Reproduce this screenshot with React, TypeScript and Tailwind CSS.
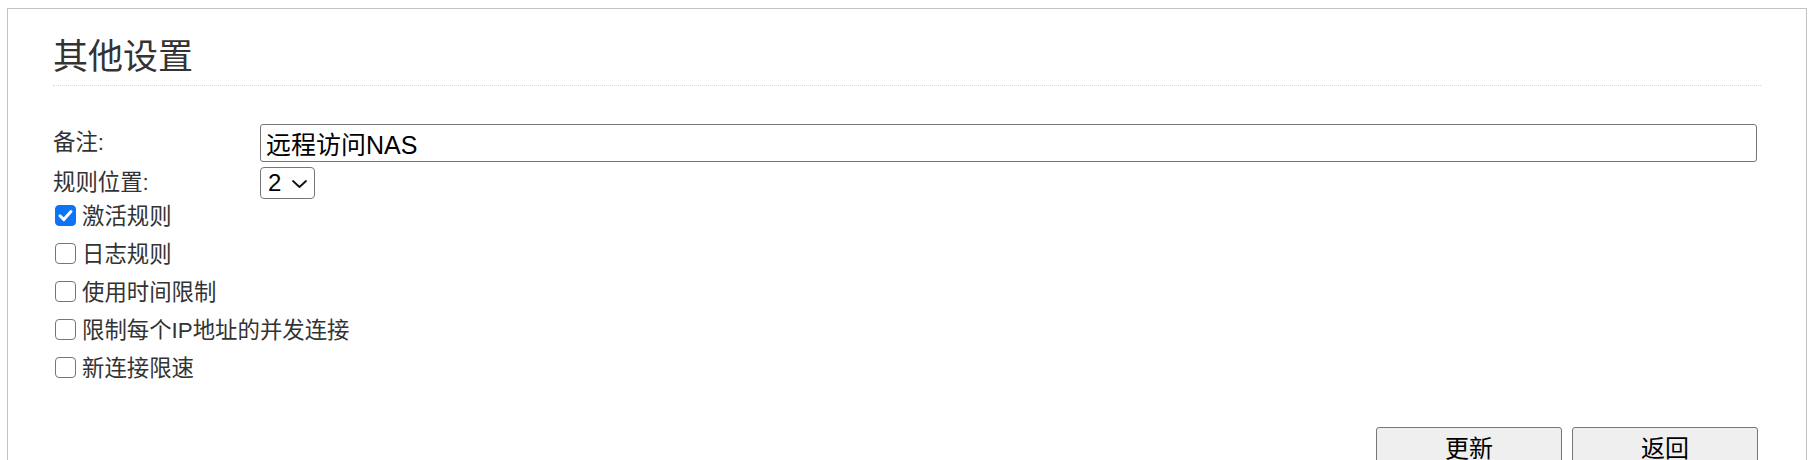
import React from "react";

const font = { fontFamily: '"Liberation Sans", "Noto Sans CJK SC", sans-serif' };

function CheckRow({ label, checked }: { label: string; checked?: boolean }) {
  return (
    <label className="flex items-start h-[38px]">
      <span className="relative mt-[6px] ml-[2px] w-[21px] h-[21px] shrink-0">
        <input
          type="checkbox"
          defaultChecked={checked}
          className="appearance-none block w-[21px] h-[21px] m-0 border-[1.5px] border-[#767676] rounded-[4px] bg-white checked:bg-[#0b75f5] checked:border-[#0b75f5]"
        />
        {checked && (
          <svg
            className="absolute left-0 top-0 pointer-events-none"
            width="21"
            height="21"
            viewBox="0 0 21 21"
            fill="none"
          >
            <path d="M5 10.8L8.8 14.6L16 6.6" stroke="#fff" strokeWidth="3" strokeLinecap="round" strokeLinejoin="round" />
          </svg>
        )}
      </span>
      <span className="ml-[6px] text-[22.4px] leading-[36px] text-[#333]">{label}</span>
    </label>
  );
}

export default function App() {
  return (
    <div className="min-h-screen bg-white pl-[7px] pr-[10px] pt-[8px]" style={font}>
      <div className="border border-[#c4c4c4] px-[45px] pb-[40px]">
        <h2 className="pt-[26px] pb-[6px] border-b border-dotted border-[#d9d9d9] text-[35px] leading-[44px] text-[#333] font-normal">
          其他设置
        </h2>
        <div className="mt-[38px] flex flex-col">
          <div className="flex items-center h-[38px]">
            <span className="w-[207px] shrink-0 text-[22.4px] leading-[28px] text-[#333]">备注:</span>
            <input
              type="text"
              defaultValue="远程访问NAS"
              className="flex-1 h-[38px] mr-[4px] border border-[#767676] rounded-[3px] px-[5px] text-[25px] text-black outline-none"
            />
          </div>
          <div className="flex items-center h-[32px] mt-[5px]">
            <span className="w-[207px] shrink-0 text-[22.4px] leading-[28px] text-[#333]">规则位置:</span>
            <div className="relative inline-flex">
              <select
                defaultValue="2"
                className="appearance-none w-[55px] h-[32px] border border-[#767676] rounded-[4px] pl-[7px] text-[24px] leading-[30px] text-black bg-white outline-none"
              >
                <option value="1">1</option>
                <option value="2">2</option>
                <option value="3">3</option>
              </select>
              <svg
                className="absolute right-[8px] top-[13px] pointer-events-none"
                width="15"
                height="8"
                viewBox="0 0 15 8"
                fill="none"
              >
                <path d="M1 1L7.5 7L14 1" stroke="#111" strokeWidth="1.8" strokeLinecap="round" strokeLinejoin="round" />
              </svg>
            </div>
          </div>
          <div className="flex flex-col">
            <CheckRow label="激活规则" checked />
            <CheckRow label="日志规则" />
            <CheckRow label="使用时间限制" />
            <CheckRow label="限制每个IP地址的并发连接" />
            <CheckRow label="新连接限速" />
          </div>
          <div className="mt-[38px] flex justify-end gap-[10px] mr-[3px]">
            <button className="w-[186px] h-[44px] bg-[#efefef] border border-[#767676] rounded-[3px] text-[24px] text-black">
              更新
            </button>
            <button className="w-[186px] h-[44px] bg-[#efefef] border border-[#767676] rounded-[3px] text-[24px] text-black">
              返回
            </button>
          </div>
        </div>
      </div>
    </div>
  );
}
